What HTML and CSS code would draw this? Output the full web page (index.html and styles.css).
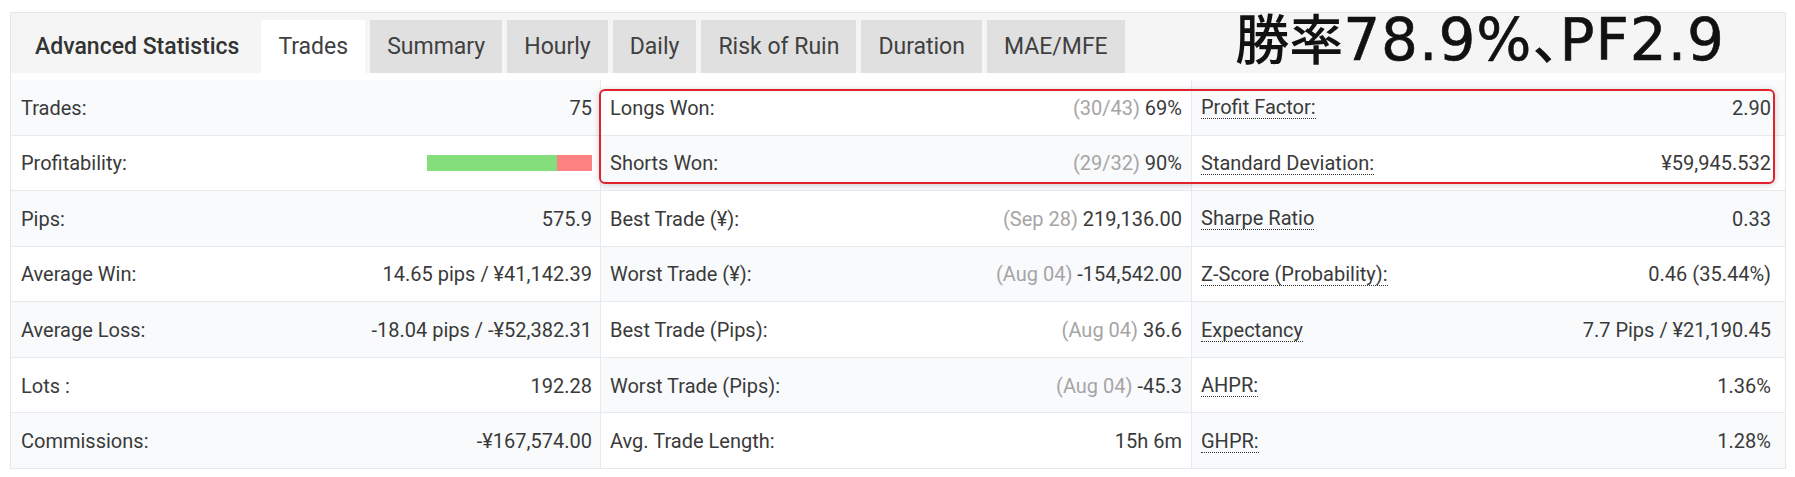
FILE: index.html
```html
<!DOCTYPE html>
<html lang="ja">
<head>
<meta charset="utf-8">
<title>Advanced Statistics</title>
<link rel="stylesheet" href="styles.css">
</head>
<body>
<div class="panel">
  <div class="header">
    <div class="title">Advanced Statistics</div>
    <div class="tabs">
      <div class="tab active">Trades</div>
      <div class="tab">Summary</div>
      <div class="tab">Hourly</div>
      <div class="tab">Daily</div>
      <div class="tab">Risk of Ruin</div>
      <div class="tab">Duration</div>
      <div class="tab">MAE/MFE</div>
    </div>
    <div class="headline"><span class="cjk">勝率</span>78.9%<span class="punct">、</span>PF2.9</div>
  </div>
  <div class="grid">
    <div class="col col1 odd">
      <div class="row"><span class="lbl">Trades:</span><span class="val">75</span></div>
      <div class="row"><span class="lbl">Profitability:</span><span class="bar"><span class="win" style="width:79%"></span><span class="loss" style="width:21%"></span></span></div>
      <div class="row"><span class="lbl">Pips:</span><span class="val">575.9</span></div>
      <div class="row"><span class="lbl">Average Win:</span><span class="val">14.65 pips / ¥41,142.39</span></div>
      <div class="row"><span class="lbl">Average Loss:</span><span class="val">-18.04 pips / -¥52,382.31</span></div>
      <div class="row"><span class="lbl">Lots :</span><span class="val">192.28</span></div>
      <div class="row"><span class="lbl">Commissions:</span><span class="val">-¥167,574.00</span></div>
    </div>
    <div class="col col2 even">
      <div class="row"><span class="lbl">Longs Won:</span><span class="val"><span class="muted">(30/43)</span> 69%</span></div>
      <div class="row"><span class="lbl">Shorts Won:</span><span class="val"><span class="muted">(29/32)</span> 90%</span></div>
      <div class="row"><span class="lbl">Best Trade (¥):</span><span class="val"><span class="muted">(Sep 28)</span> 219,136.00</span></div>
      <div class="row"><span class="lbl">Worst Trade (¥):</span><span class="val"><span class="muted">(Aug 04)</span> -154,542.00</span></div>
      <div class="row"><span class="lbl">Best Trade (Pips):</span><span class="val"><span class="muted">(Aug 04)</span> 36.6</span></div>
      <div class="row"><span class="lbl">Worst Trade (Pips):</span><span class="val"><span class="muted">(Aug 04)</span> -45.3</span></div>
      <div class="row"><span class="lbl">Avg. Trade Length:</span><span class="val">15h 6m</span></div>
    </div>
    <div class="col col3 odd">
      <div class="row"><span class="lbl dotted">Profit Factor:</span><span class="val">2.90</span></div>
      <div class="row"><span class="lbl dotted">Standard Deviation:</span><span class="val">¥59,945.532</span></div>
      <div class="row"><span class="lbl dotted">Sharpe Ratio</span><span class="val">0.33</span></div>
      <div class="row"><span class="lbl dotted">Z-Score (Probability):</span><span class="val">0.46 (35.44%)</span></div>
      <div class="row"><span class="lbl dotted">Expectancy</span><span class="val">7.7 Pips / ¥21,190.45</span></div>
      <div class="row"><span class="lbl dotted">AHPR:</span><span class="val">1.36%</span></div>
      <div class="row"><span class="lbl dotted">GHPR:</span><span class="val">1.28%</span></div>
    </div>
  </div>
  <div class="highlight"></div>
</div>
</body>
</html>
```
FILE: styles.css
```css
html, body {
  margin: 0;
  padding: 0;
  background: #ffffff;
}
body {
  font-family: Roboto, "Liberation Sans", sans-serif;
  color: #3a3a3a;
}
.panel {
  position: relative;
  margin: 12px 0 0 10px;
  width: 1776px;
  box-sizing: border-box;
  border: 1px solid #e6e6e6;
  border-bottom: none;
}
.header {
  display: flex;
  align-items: flex-end;
  height: 60px;
  background: #f5f5f5;
  margin-bottom: 7px;
}
.title {
  height: 53px;
  line-height: 53px;
  padding-left: 24px;
  padding-right: 22px;
  font-size: 23px;
  font-weight: 500;
  color: #333333;
}
.tabs {
  display: flex;
  gap: 5px;
}
.tab {
  height: 53px;
  line-height: 53px;
  padding: 0 17px;
  font-size: 23px;
  color: #404040;
  background: #e0e0e0;
}
.tab.active {
  background: #ffffff;
}
.headline {
  margin-left: auto;
  margin-right: 60px;
  align-self: center;
  margin-bottom: 10px;
  font-family: "DejaVu Sans", "Noto Sans CJK JP", sans-serif;
  font-size: 58px;
  letter-spacing: 1px;
  line-height: 50px;
  color: #111111;
  white-space: nowrap;
  -webkit-text-stroke: 0.6px #111111;
}
.cjk {
  font-family: "Noto Sans CJK JP", sans-serif;
  font-size: 54px;
  font-weight: 500;
  letter-spacing: 0;
  -webkit-text-stroke: 0;
}
.punct {
  font-family: "Noto Sans CJK JP", sans-serif;
  font-size: 54px;
  font-weight: 500;
  letter-spacing: 0;
  font-feature-settings: "halt" 1;
  -webkit-text-stroke: 0;
}
.grid {
  display: grid;
  grid-template-columns: 589px 591px 1fr;
}
.col2, .col3 {
  border-left: 1px solid #e6e9ee;
}
.row {
  height: 55.57px;
  box-sizing: border-box;
  border-bottom: 1px solid #e6e9ee;
  display: flex;
  align-items: center;
  justify-content: space-between;
  font-size: 20px;
  padding: 1px 8px 0 10px;
  white-space: nowrap;
}
.col2 .row {
  padding: 1px 9px 0 9px;
}
.col3 .row {
  padding: 1px 14px 0 9px;
}
.odd .row:nth-child(odd) {
  background: #f9fafc;
}
.even .row:nth-child(even) {
  background: #f9fafc;
}
.lbl {
  color: #3a3a3a;
}
.dotted {
  border-bottom: 1px dotted #333333;
  line-height: 22px;
}
.val {
  color: #3a3a3a;
}
.muted {
  color: #a5a5a5;
}
.bar {
  display: flex;
  width: 165px;
  height: 16px;
}
.win {
  background: #84de7b;
}
.loss {
  background: #fd8181;
}
.highlight {
  position: absolute;
  left: 588px;
  top: 76px;
  width: 1176px;
  height: 95px;
  box-sizing: border-box;
  border: 2px solid #e0232b;
  border-radius: 6px;
  box-shadow: 0 1px 6px rgba(0, 0, 0, 0.18);
  pointer-events: none;
}
```
